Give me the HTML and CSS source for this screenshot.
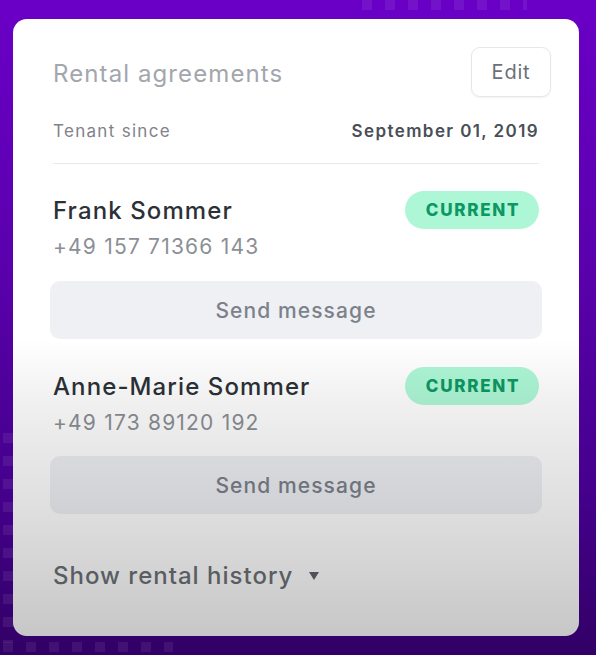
FILE: index.html
```html
<!DOCTYPE html>
<html>
<head>
<meta charset="utf-8">
<link rel="stylesheet" href="styles.css">
</head>
<body>
<div class="dots dots-top"></div>
<div class="dots dots-bottom"></div>
<div class="dots dots-left"></div>
<div class="card">
  <div class="header">
    <h2 class="title">Rental agreements</h2>
    <button class="edit">Edit</button>
  </div>
  <div class="since">
    <span class="since-label">Tenant since</span>
    <span class="since-date">September 01, 2019</span>
  </div>
  <hr class="divider">
  <div class="person">
    <div class="person-row">
      <span class="name">Frank Sommer</span>
      <span class="badge">CURRENT</span>
    </div>
    <div class="phone">+49 157 71366 143</div>
    <button class="send">Send message</button>
  </div>
  <div class="person">
    <div class="person-row">
      <span class="name">Anne-Marie Sommer</span>
      <span class="badge">CURRENT</span>
    </div>
    <div class="phone">+49 173 89120 192</div>
    <button class="send">Send message</button>
  </div>
  <div class="history">Show rental history <span class="caret"></span></div>
  <div class="shade"></div>
</div>
</body>
</html>
```
FILE: styles.css
```css
* { box-sizing: border-box; }
html, body { margin: 0; padding: 0; }
body {
  width: 596px;
  height: 655px;
  overflow: hidden;
  position: relative;
  font-family: Inter, "Noto Sans", sans-serif;
  background: linear-gradient(to bottom, #6a00c6 0%, #5a00ad 40%, #45008c 75%, #320066 100%);
  padding: 19px 17px 0 13px;
}
.dots {
  position: absolute;
  background-image: linear-gradient(rgba(255,255,255,0.07), rgba(255,255,255,0.07));
  -webkit-mask-image: repeating-linear-gradient(to right, #000 0 10px, transparent 10px 23px), repeating-linear-gradient(to bottom, #000 0 10px, transparent 10px 23px);
  -webkit-mask-composite: source-in;
  mask-composite: intersect;
}
.dots-top { left: 362px; top: 0; width: 165px; height: 10px; }
.dots-bottom { left: 3px; top: 642px; width: 170px; height: 13px; }
.dots-left { left: 3px; top: 433px; width: 10px; height: 210px; }
.card {
  position: relative;
  width: 566px;
  height: 617px;
  background: #fff;
  border-radius: 14px;
  padding: 28px 40px 0 40px;
  overflow: hidden;
}
.shade {
  position: absolute;
  left: 0; right: 0; top: 0; bottom: 0;
  pointer-events: none;
  background: linear-gradient(to bottom, rgba(0,0,0,0) 0%, rgba(0,0,0,0) 52%, rgba(0,0,0,0.06) 62%, rgba(0,0,0,0.13) 80%, rgba(0,0,0,0.22) 100%);
}
.header {
  display: flex;
  justify-content: space-between;
  align-items: center;
  height: 50px;
  margin-right: -12px;
}
.title {
  margin: 3px 0 0 0;
  font-size: 24px;
  font-weight: 400;
  color: #a2a6ad;
  letter-spacing: 1.1px;
}
.edit {
  width: 80px;
  height: 50px;
  border: 1.5px solid #e6e7ea;
  border-radius: 9px;
  background: #fff;
  box-shadow: 0 1px 2px rgba(0,0,0,0.06);
  font-family: inherit;
  font-size: 20px;
  letter-spacing: 0.8px;
  color: #6c7177;
  padding: 0;
}
.since {
  display: flex;
  justify-content: space-between;
  align-items: center;
  margin-top: 22px;
  height: 24px;
  letter-spacing: 1.3px;
}
.since-label { font-size: 17px; color: #7f838a; }
.since-date { font-size: 17px; font-weight: 600; color: #4a4f57; letter-spacing: 1.4px; }
.divider {
  margin: 20px 0 0 0;
  border: 0;
  height: 1px;
  background: #e6e8eb;
}
.person { margin-top: 27px; }
.person + .person { margin-top: 28px; }
.person-row {
  display: flex;
  justify-content: space-between;
  align-items: center;
  height: 38px;
}
.name { font-size: 24px; font-weight: 500; color: #2c3137; letter-spacing: 1.1px; }
.badge {
  width: 134px;
  height: 38px;
  border-radius: 19px;
  background: #adf7d6;
  color: #0c9862;
  font-weight: 800;
  font-size: 17px;
  letter-spacing: 1.7px;
  display: flex;
  align-items: center;
  justify-content: center;
  padding-left: 2px;
}
.phone {
  margin-top: 5px;
  height: 26px;
  line-height: 26px;
  font-size: 21px;
  color: #8b8f96;
  letter-spacing: 1.2px;
}
.send {
  display: block;
  margin: 21px -3px 0 -3px;
  width: calc(100% + 6px);
  height: 58px;
  border: 0;
  border-radius: 10px;
  background: #eef0f4;
  font-family: inherit;
  font-size: 21px;
  font-weight: 500;
  letter-spacing: 1.1px;
  color: #7c818a;
}
.person + .person .send { margin-top: 20px; }
.history {
  margin-top: 47px;
  height: 30px;
  line-height: 30px;
  font-size: 24px;
  font-weight: 500;
  letter-spacing: 1px;
  color: #6c7177;
  display: flex;
  align-items: center;
}
.caret {
  display: inline-block;
  margin-left: 16px;
  width: 0; height: 0;
  border-left: 5px solid transparent;
  border-right: 5px solid transparent;
  border-top: 8px solid #5f646b;
}
```
